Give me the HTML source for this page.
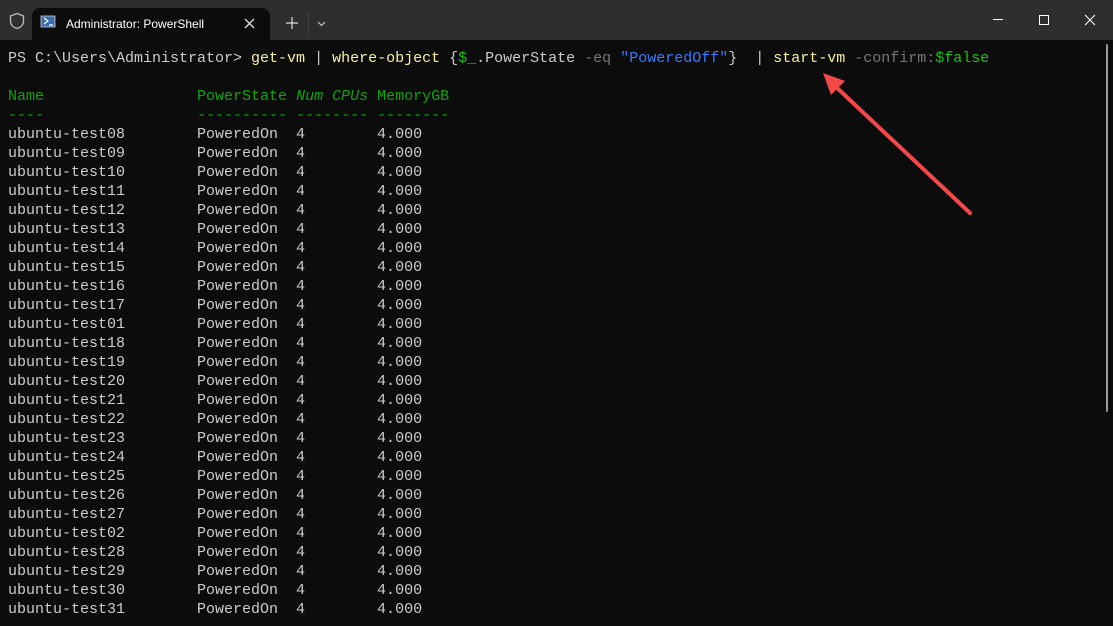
<!DOCTYPE html><html><head><style>
html,body{margin:0;padding:0;width:1113px;height:626px;overflow:hidden;background:#0c0c0c}
.tb{position:absolute;left:0;top:0;width:1113px;height:40px;background:#2e2e2e}
.tab{position:absolute;left:32px;top:8px;width:238px;height:32px;background:#0c0c0c;border-radius:8px 8px 0 0}
.t{font-family:"Liberation Sans",sans-serif;font-size:12px;color:#fff;position:absolute;top:17px;left:66px}
pre{position:absolute;left:8px;top:49px;margin:0;font-family:"Liberation Mono",monospace;font-size:15px;line-height:19px;color:#cccccc}
.y{color:#f9f1a5}.g{color:#767676}.b{color:#3b78ff}.gr{color:#16c60c}.h{color:#13a10e}.i{font-style:italic;color:#13a10e}
</style></head><body>
<div class="tb"></div>
<svg style="position:absolute;left:0;top:0" width="1113" height="40">
<path d="M10.5 16 L17 13.5 L23.5 16 V21 C23.5 25 20.5 27.5 17 28.5 C13.5 27.5 10.5 25 10.5 21 Z" fill="none" stroke="#bbb" stroke-width="1.3"/>
</svg>
<div class="tab"></div>
<svg style="position:absolute;left:0;top:0" width="1113" height="40">
<rect x="41" y="16" width="14" height="11" fill="#3a6fb0" stroke="#ccc" stroke-width="0.8"/>
<path d="M44 18 l4 3 l-4 3 M49 25 h4" stroke="#fff" stroke-width="1.2" fill="none"/>
<path d="M245 19 l9 9 M254 19 l-9 9" stroke="#ddd" stroke-width="1.3"/>
<path d="M292 17 v12 M286 23 h12" stroke="#ddd" stroke-width="1.2"/>
<line x1="308.5" y1="12" x2="308.5" y2="34" stroke="#444"/>
<path d="M318 22 l3.5 3.5 l3.5 -3.5" stroke="#ccc" stroke-width="1.1" fill="none"/>
<path d="M993 19.5 h10" stroke="#fff" stroke-width="1"/>
<rect x="1039.5" y="15.5" width="9" height="9" fill="none" stroke="#fff"/>
<path d="M1085 15 l10 10 M1095 15 l-10 10" stroke="#fff" stroke-width="1"/>
</svg>
<div class="t">Administrator: PowerShell</div>
<pre>PS C:\Users\Administrator&gt; <span class="y">get-vm</span> | <span class="y">where-object</span> {<span class="gr">$_</span>.PowerState <span class="g">-eq</span> <span class="b">"PoweredOff"</span>}  | <span class="y">start-vm</span> <span class="g">-confirm:</span><span class="gr">$false</span>

<span class="h">Name                </span> <span class="h">PowerState</span> <span class="i">Num CPUs</span> <span class="h">MemoryGB</span>
<span class="h">----                </span> <span class="h">----------</span> <span class="h">--------</span> <span class="h">--------</span>
ubuntu-test08        PoweredOn  4        4.000
ubuntu-test09        PoweredOn  4        4.000
ubuntu-test10        PoweredOn  4        4.000
ubuntu-test11        PoweredOn  4        4.000
ubuntu-test12        PoweredOn  4        4.000
ubuntu-test13        PoweredOn  4        4.000
ubuntu-test14        PoweredOn  4        4.000
ubuntu-test15        PoweredOn  4        4.000
ubuntu-test16        PoweredOn  4        4.000
ubuntu-test17        PoweredOn  4        4.000
ubuntu-test01        PoweredOn  4        4.000
ubuntu-test18        PoweredOn  4        4.000
ubuntu-test19        PoweredOn  4        4.000
ubuntu-test20        PoweredOn  4        4.000
ubuntu-test21        PoweredOn  4        4.000
ubuntu-test22        PoweredOn  4        4.000
ubuntu-test23        PoweredOn  4        4.000
ubuntu-test24        PoweredOn  4        4.000
ubuntu-test25        PoweredOn  4        4.000
ubuntu-test26        PoweredOn  4        4.000
ubuntu-test27        PoweredOn  4        4.000
ubuntu-test02        PoweredOn  4        4.000
ubuntu-test28        PoweredOn  4        4.000
ubuntu-test29        PoweredOn  4        4.000
ubuntu-test30        PoweredOn  4        4.000
ubuntu-test31        PoweredOn  4        4.000</pre>
<div style="position:absolute;left:1106px;top:44px;width:2px;height:368px;background:#9a9a9a;border-radius:1px"></div>
<svg style="position:absolute;left:0;top:0" width="1113" height="626">
<line x1="970" y1="213" x2="835" y2="86" stroke="#f44848" stroke-width="4" stroke-linecap="round"/>
<path d="M823 73 L845 81 L831 95 Z" fill="#f44848"/>
</svg>
</body></html>
